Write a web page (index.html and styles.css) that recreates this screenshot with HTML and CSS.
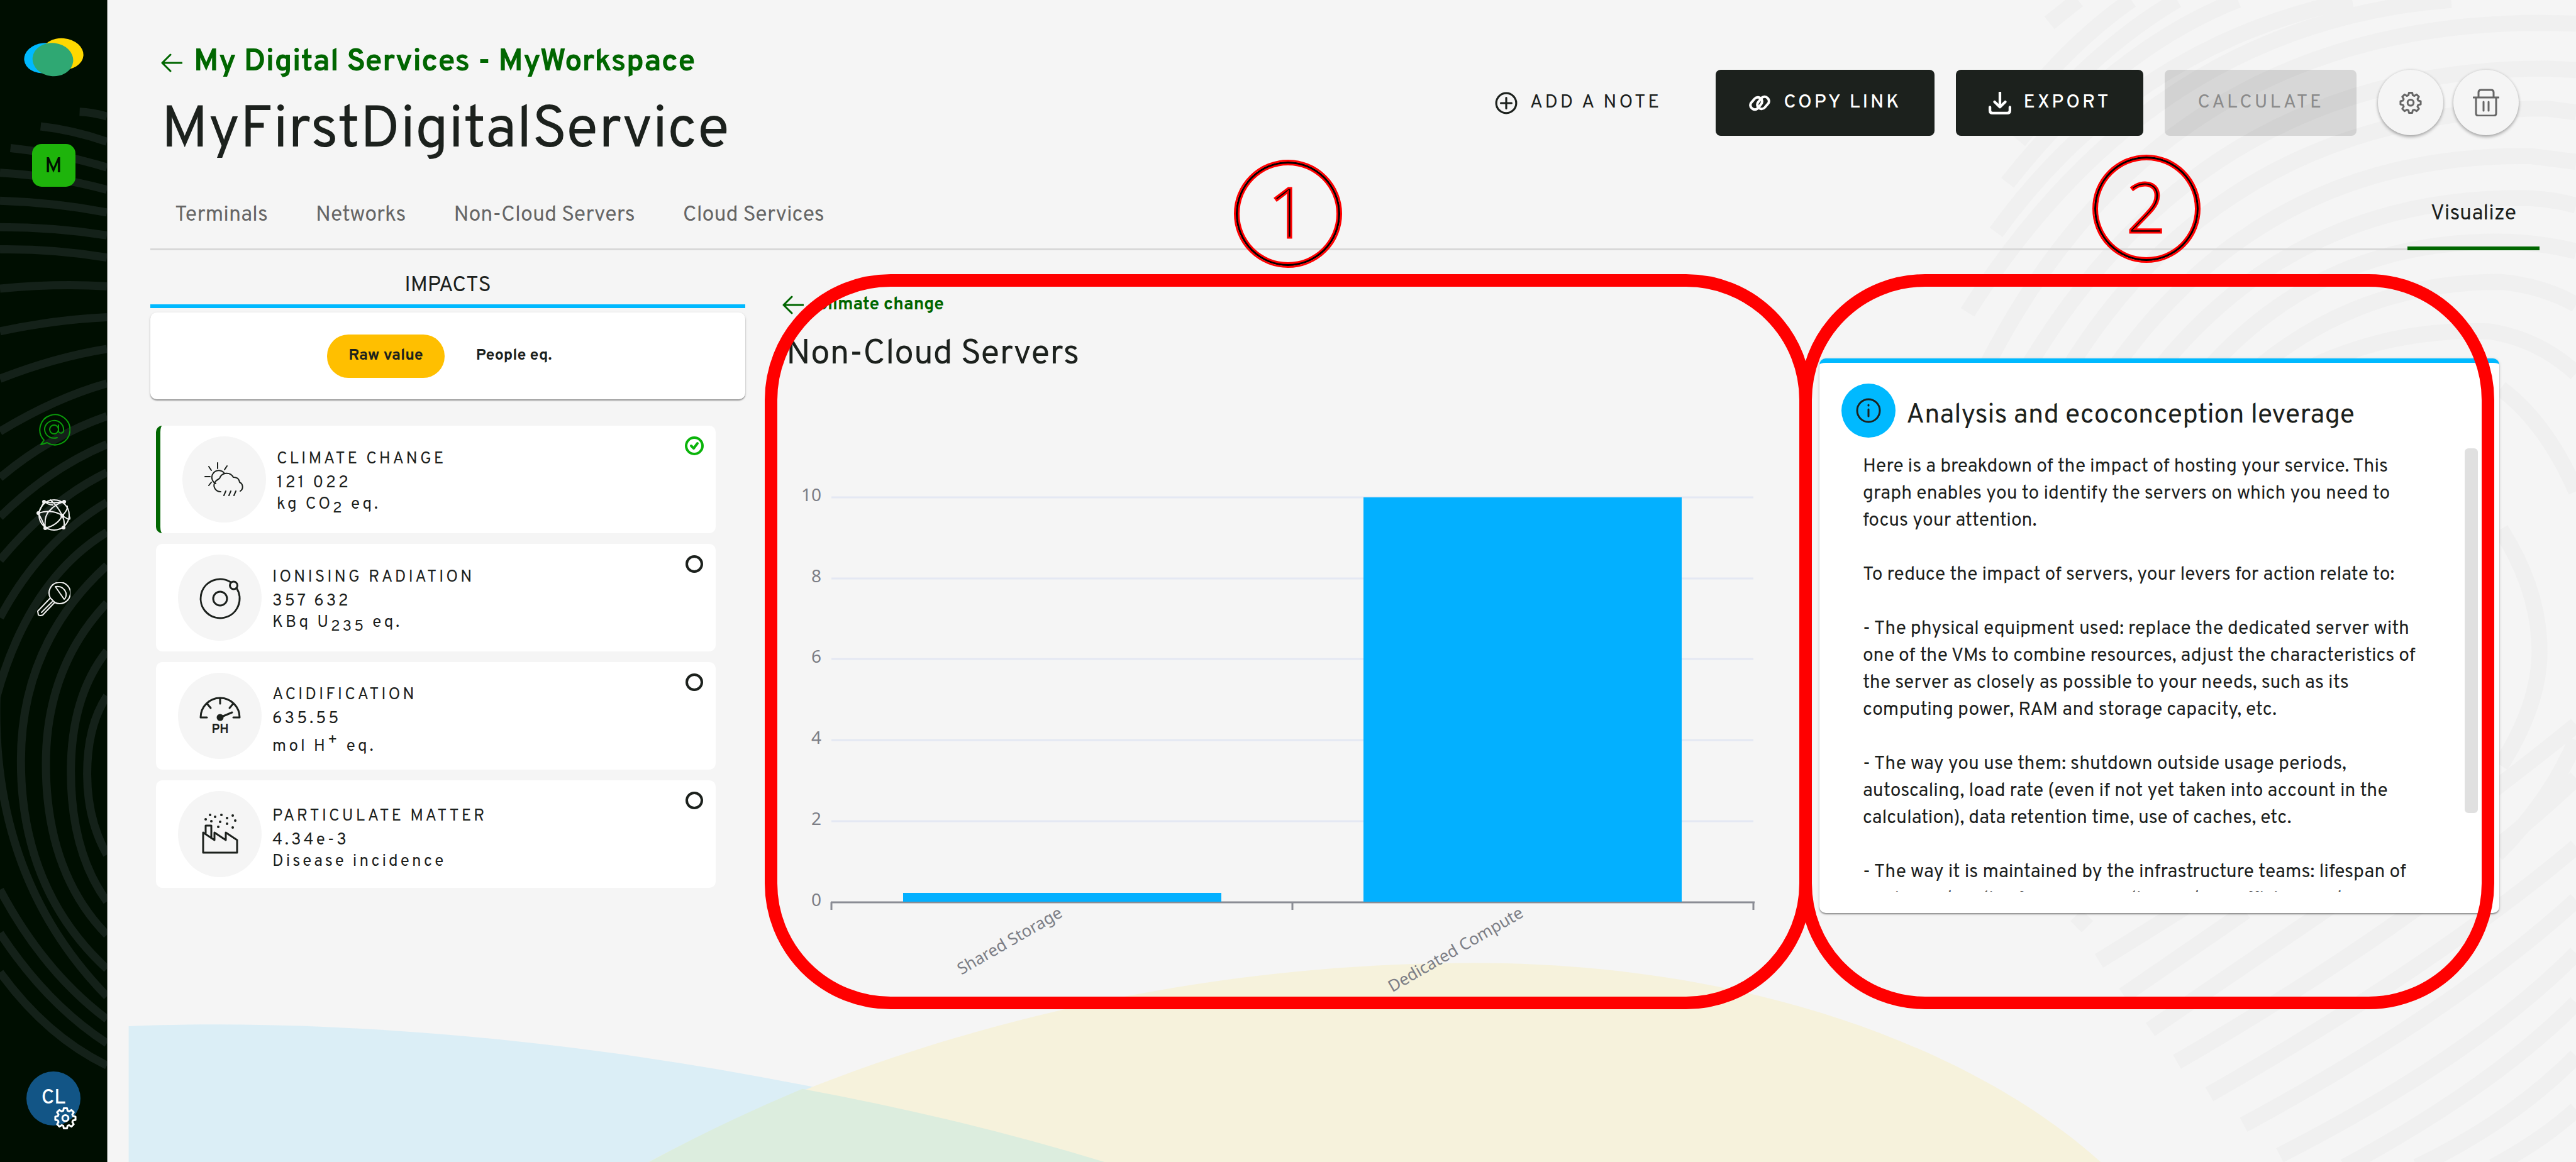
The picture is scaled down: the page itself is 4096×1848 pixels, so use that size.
FILE: index.html
```html
<!DOCTYPE html>
<html lang="en">
<head>
<meta charset="utf-8">
<title>MyFirstDigitalService</title>
<link rel="stylesheet" href="styles.css">
</head>
<body>
<svg class="defs" aria-hidden="true">
  <symbol id="gear" viewBox="0 0 24 24"><path d="M10.3 1.8h3.4l.6 2.7 1.7.7 2.4-1.5 2.4 2.4-1.5 2.4.7 1.7 2.7.6v3.4l-2.7.6-.7 1.7 1.5 2.4-2.4 2.4-2.4-1.5-1.7.7-.6 2.7h-3.4l-.6-2.7-1.7-.7-2.4 1.5-2.4-2.4 1.5-2.4-.7-1.7-2.7-.6v-3.4l2.7-.6.7-1.7-1.5-2.4 2.4-2.4 2.4 1.5 1.7-.7z" transform="translate(0 -.2)"/><circle cx="12" cy="12.2" r="3.2"/></symbol>
  <symbol id="arrow" viewBox="0 0 34 30"><path d="M33 15H2M15 2L2 15l13 13"/></symbol>
</svg>
<div class="app">
  <aside class="sidebar">
    <svg class="sidebar-rings" viewBox="0 0 184 1985" preserveAspectRatio="none" aria-hidden="true">
      <path d="M137 191Q160 192 184 199M70 216Q125 222 184 242M18 253Q105 262 184 286M0 295Q95 300 184 324M0 343Q95 346 184 363M0 388Q95 388 184 402M0 426Q95 425 184 440M0 493Q95 484 184 489M0 566Q95 546 184 542M0 647Q95 610 184 596M0 737Q95 680 184 655M0 816Q85 745 184 711M0 883Q85 800 184 759M0 957Q85 855 184 807M0 1055Q70 925 184 858M-6 1190Q50 990 184 909M-6 1190Q-15 1500 184 1702M184 966Q36 1100 36 1300Q36 1520 184 1655M184 1030Q79 1140 79 1305Q79 1490 184 1597M184 1112Q122 1190 122 1318Q122 1455 184 1540M184 1189Q150 1240 150 1322Q150 1400 184 1460M0 1520Q75 1660 184 1741M0 1594Q80 1715 184 1782M0 1661Q80 1770 184 1820"/>
    </svg>
    <svg class="logo" viewBox="0 0 102 67" role="img" aria-label="Logo">
      <ellipse cx="35" cy="35" rx="35" ry="26" fill="#00b9ff" transform="rotate(-6 35 35)"/>
      <ellipse cx="66" cy="28" rx="36" ry="27" fill="#ffd800" transform="rotate(5 66 28)"/>
      <ellipse cx="49.500" cy="37.500" rx="35" ry="28.500" fill="#2fa873" transform="rotate(6 49 37)"/>
    </svg>
    <button class="workspace">M</button>
    <nav class="side-nav">
      <a href="#services" class="side-link active" aria-label="Digital services"><svg viewBox="0 0 54 54"><path d="M12 44A24 24 0 1 1 17 48L7 51z"/><circle cx="28" cy="27" r="7"/><path d="M35 20v10a4 4 0 0 0 8-3A15 14 0 1 0 33 40"/></svg></a>
      <a href="#network" class="side-link" aria-label="Inventories"><svg viewBox="0 0 54 54"><circle cx="28" cy="28" r="24"/><path d="M3 25Q25 18 41 29T52 30M12 7Q24 10 44 7M12 7L3 25M4 27Q10 38 14 49M14 49Q12 30 20 22Q30 10 44 7M14 49Q34 44 41 29Q34 14 22 4M41 29Q50 20 49 14M41 29Q46 40 43 48M14 7Q18 12 26 12"/><g class="dots"><circle cx="12" cy="7" r="2"/><circle cx="44" cy="7" r="2"/><circle cx="3" cy="25" r="2"/><circle cx="41" cy="29" r="2"/><circle cx="14" cy="49" r="2"/><circle cx="43" cy="48" r="2"/></g></svg></a>
      <a href="#admin" class="side-link" aria-label="Administration"><svg viewBox="0 0 54 54"><path d="M22 25A17 17 0 1 1 29 32L10 52Q6 54 3 52L2 46L22 25L29 32M8 48L25 31"/><path d="M30 7Q43 5 47 17Q48 24 44 27z"/></svg></a>
    </nav>
    <button class="avatar" aria-label="Account CL">CL<svg class="avatar-gear" aria-hidden="true"><use href="#gear"/></svg></button>
  </aside>

  <main class="main">
    <svg class="backdrop" viewBox="184 0 4216 1985" preserveAspectRatio="none" aria-hidden="true">
      <g class="rings" transform="translate(3380 0) scale(.6506)">
        <path d="M185 60L260 0M150 230Q270 90 400 0M105 370Q300 130 520 0M75 480Q350 130 680 0M45 610Q400 120 980 0M-30 820Q450 60 1240 0M20 960Q480 60 1480 60L1568 62M130 960Q600 180 1490 180L1568 184M240 960Q660 290 1490 285L1568 295M360 960Q760 400 1450 410L1568 425M480 960Q840 520 1420 520Q1500 520 1568 540M610 960Q920 620 1400 635Q1490 640 1568 660M740 960Q1010 740 1370 740Q1480 750 1568 800M880 960Q1100 860 1340 870Q1470 890 1568 980M1370 1020Q1490 1110 1568 1290M1370 1390Q1472 1550 1472 1710Q1472 1850 1370 2010"/>
      </g>
      <g class="rings" transform="translate(3380 965) scale(.6506)">
        <path d="M255 950L285 920M315 1040L540 900M380 1130L700 910M450 1220L890 920Q1300 640 1568 420M520 1305Q1200 910 1568 560M605 1390Q1200 1050 1568 740M695 1470Q1250 1170 1568 880M790 1550Q1300 1290 1568 1020M960 1580Q1350 1370 1568 1150M1150 1580Q1400 1460 1568 1290M1350 1580Q1480 1510 1568 1430M1360 760Q1500 620 1568 460"/>
      </g>
      <path fill="#dbeef6" d="M219 1985V1753C700 1733 1350 1813 1886 1985Z"/>
      <path fill="#f6f2dc" d="M1108 1985C1400 1828 1900 1645 2517 1645C3000 1645 3380 1798 3588 1985Z"/>
      <path fill="#dcedde" d="M1108 1985Q1240 1914 1370 1860Q1640 1910 1886 1985Z"/>
    </svg>

    <header class="header">
      <div class="heading">
        <a class="back-link" href="#services"><svg class="arrow"><use href="#arrow"/></svg>My Digital Services - MyWorkspace</a>
        <h1>MyFirstDigitalService</h1>
      </div>
      <div class="toolbar">
        <button class="btn btn-text"><svg class="icon" viewBox="0 0 34 34"><circle cx="17" cy="17" r="15"/><path d="M17 9v16M9 17h16"/></svg>ADD A NOTE</button>
        <button class="btn btn-dark"><svg class="icon thick" viewBox="0 0 36 36"><path d="M14 27a7 7 0 0 1-10-9l6-7a7 7 0 0 1 11 1q2 5-1 8l-4 5"/><path d="M22 9a7 7 0 0 1 10 9l-6 7a7 7 0 0 1-11-1q-2-5 1-8l4-5"/></svg>COPY LINK</button>
        <button class="btn btn-dark"><svg class="icon thick" viewBox="0 0 34 34"><path d="M17 1v22M9 15l8 8 8-8M2 23v5q0 4 4 4h22q4 0 4-4v-5"/></svg>EXPORT</button>
        <button class="btn btn-disabled" disabled>CALCULATE</button>
        <div class="round-group">
          <button class="round" aria-label="Settings"><svg class="icon"><use href="#gear"/></svg></button>
          <button class="round" aria-label="Delete"><svg class="icon trash" viewBox="0 0 42 44"><path d="M1 14h40M5 14v25q0 4 4 4h24q4 0 4-4V14M9 14V6q0-4 4-4h16q4 0 4 4v8M17 21v14M25 21v14"/></svg></button>
        </div>
      </div>
    </header>

    <nav class="tabs">
      <a href="#terminals">Terminals</a>
      <a href="#networks">Networks</a>
      <a href="#servers">Non-Cloud Servers</a>
      <a href="#cloud">Cloud Services</a>
      <a href="#visualize" class="current">Visualize</a>
    </nav>

    <div class="content">
      <section class="impacts">
        <h2>IMPACTS</h2>
        <div class="switch">
          <button class="pill selected">Raw value</button>
          <button class="pill">People eq.</button>
        </div>
        <div class="cards">
          <button class="card selected">
            <span class="disc"><svg class="fine" viewBox="0 0 64 64"><path d="M18 38a11 11 0 1 1 14-16M21 5v9M7 11l4 6M36 10l-4 6M1 27h8M7 41l4-5M26 51a10 10 0 0 1-5-19a10 10 0 0 1 3-2a12 12 0 0 1 22-2q9 0 10 8a8 8 0 0 1 1 14M34 50l-3 7M42 50l-3 7M50 50l-3 7"/></svg></span>
            <span class="facts"><span class="name">CLIMATE CHANGE</span><span>121 022</span><span>kg CO<sub>2</sub> eq.</span></span>
            <svg class="state" viewBox="0 0 30 30"><circle cx="15" cy="15" r="13"/><path d="M10 15l4 4 6-8"/></svg>
          </button>
          <button class="card">
            <span class="disc"><svg viewBox="0 0 64 64"><path d="M49 7A31 31 0 1 0 58 16"/><circle cx="32" cy="33" r="11"/><circle cx="53.500" cy="12" r="6"/></svg></span>
            <span class="facts"><span class="name">IONISING RADIATION</span><span>357 632</span><span>KBq U<sub>235</sub> eq.</span></span>
            <svg class="state" viewBox="0 0 30 30"><circle cx="15" cy="15" r="12"/></svg>
          </button>
          <button class="card">
            <span class="disc"><svg viewBox="0 0 64 64"><path d="M11 34H1a31 31 0 0 1 62 0H53M32 3v9M12 13l5 6M52 13l-5 6M32 34l19-8"/><circle cx="32" cy="34" r="4" fill="currentColor"/><text x="32" y="59">PH</text></svg></span>
            <span class="facts"><span class="name">ACIDIFICATION</span><span>635.55</span><span>mol H<sup>+</sup> eq.</span></span>
            <svg class="state" viewBox="0 0 30 30"><circle cx="15" cy="15" r="12"/></svg>
          </button>
          <button class="card">
            <span class="disc"><svg viewBox="0 0 64 64"><path d="M5 61V29l18 12V29l18 12V29l18 12v20zM9 31V18h9v20"/><path class="specks" d="M16 1h.1M24 4h.1M34 1h.1M43 6h.1M52 2h.1M9 8h.1M18 11h.1M32 12h.1M43 15h.1M56 10h.1M29 20h.1M52 21h.1"/></svg></span>
            <span class="facts"><span class="name">PARTICULATE MATTER</span><span>4.34e-3</span><span>Disease incidence</span></span>
            <svg class="state" viewBox="0 0 30 30"><circle cx="15" cy="15" r="12"/></svg>
          </button>
        </div>
      </section>

      <section class="chart">
        <a class="crumb" href="#climate"><svg class="arrow"><use href="#arrow"/></svg>Climate change</a>
        <h2>Non-Cloud Servers</h2>
        <svg class="plot" viewBox="0 0 1620 1000" role="img" aria-label="Impact by server type">
          <path class="grid" d="M81 192H1547M81 321H1547M81 449H1547M81 578H1547M81 707H1547"/>
          <g class="y-labels"><text x="65" y="198">10</text><text x="65" y="327">8</text><text x="65" y="455">6</text><text x="65" y="584">4</text><text x="65" y="713">2</text><text x="65" y="842">0</text></g>
          <path class="axis" d="M80 836H1549M81 836V848M814 836V848M1547 836V848"/>
          <rect class="bar" x="195" y="821" width="506" height="14"/>
          <rect class="bar" x="927" y="192" width="506" height="643"/>
          <g class="x-labels"><text transform="translate(450 858) rotate(-30)">Shared Storage</text><text transform="translate(1183 858) rotate(-30)">Dedicated Compute</text></g>
        </svg>
        <div class="callout-frame"></div>
        <div class="callout-number">1</div>
      </section>

      <section class="analysis">
        <div class="panel">
          <div class="panel-head">
            <span class="info"><svg viewBox="0 0 40 40"><circle cx="20" cy="20" r="18"/><path d="M20 18v11M20 11v1"/></svg></span>
            <h2>Analysis and ecoconception leverage</h2>
          </div>
          <div class="panel-body">
            <div class="panel-text">
              <p>Here is a breakdown of the impact of hosting your service. This<br>graph enables you to identify the servers on which you need to<br>focus your attention.</p>
              <p>To reduce the impact of servers, your levers for action relate to:</p>
              <p>- The physical equipment used: replace the dedicated server with<br>one of the VMs to combine resources, adjust the characteristics of<br>the server as closely as possible to your needs, such as its<br>computing power, RAM and storage capacity, etc.</p>
              <p>- The way you use them: shutdown outside usage periods,<br>autoscaling, load rate (even if not yet taken into account in the<br>calculation), data retention time, use of caches, etc.</p>
              <p>- The way it is maintained by the infrastructure teams: lifespan of<br>equipment, policy for reuse, cooling system, efficiency, etc.</p>
            </div>
            <div class="scroll-thumb"></div>
          </div>
        </div>
        <div class="callout-frame"></div>
        <div class="callout-number">2</div>
      </section>
    </div>
  </main>
</div>
</body>
</html>
```
FILE: styles.css
```css
* { box-sizing: border-box; }
body { margin: 0; background: #f5f5f5; color: #1c211d; font-family: "Overpass", Roboto, "Liberation Sans", sans-serif; font-size: 30px; }
h1, h2, p { margin: 0; font-weight: 400; }
button { margin: 0; padding: 0; border: 0; background: none; color: inherit; font: inherit; }
a { color: inherit; text-decoration: none; }
svg { display: block; fill: none; stroke: currentColor; stroke-width: 3px; stroke-linecap: round; stroke-linejoin: round; flex: none; }
.defs { position: absolute; width: 0; height: 0; }
.app { display: flex; min-height: 100vh; }

/* Sidebar */
.sidebar { position: relative; width: 172px; flex: none; display: flex; flex-direction: column; align-items: center; padding: 60px 0 58px; background: #000e01; border-right: 2px solid #a8aaa8; }
.sidebar-rings { position: absolute; top: 0; left: 0; width: 100%; height: 100%; stroke: #142119; stroke-width: 14px; stroke-linecap: butt; }
.logo { position: relative; width: 95px; height: 62px; stroke: none; }
.workspace { position: relative; width: 69px; height: 68px; margin-top: 107px; padding-top: 4px; border-radius: 15px; background: #1eb40b; color: #000e01; font-size: 34px; font-weight: 500; }
.side-nav { position: relative; display: flex; flex-direction: column; gap: 81px; margin-top: 359px; color: #f0f0f0; }
.side-link svg { width: 54px; height: 54px; stroke-width: 2px; }
.side-link.active { color: #0a9c0a; }
.dots { fill: currentColor; }
.avatar { position: relative; width: 86px; height: 86px; margin-top: auto; border-radius: 50%; background: #125586; color: #fff; font-size: 32px; font-weight: 500; }
.avatar-gear { position: absolute; right: 6px; bottom: -6px; width: 36px; height: 36px; }

/* Page */
.main { position: relative; flex: 1; min-width: 0; padding: 64px 58px 0 67px; }
.main > * { position: relative; }
.main > .backdrop { position: absolute; top: 0; left: 0; width: 100%; height: 100%; stroke: none; }
.rings { stroke: #f0f0f0; stroke-width: 42px; stroke-linecap: butt; }
.header { display: flex; justify-content: space-between; align-items: flex-start; padding: 0 33px 0 17px; }
.heading { padding-top: 4px; }
.back-link { display: flex; align-items: center; gap: 18px; color: #006600; font-size: 49px; line-height: 64px; font-weight: 700; }
.arrow { width: 34px; height: 30px; stroke-width: 3px; }
h1 { margin-top: 22px; font-size: 94px; line-height: 112px; }
.toolbar { display: flex; gap: 34px; padding-top: 47px; }
.btn { display: flex; align-items: center; gap: 20px; height: 105px; padding: 0 52px; border-radius: 8px; font-size: 30px; letter-spacing: 4px; font-weight: 500; }
.btn-text { font-weight: 400; }
.btn-dark { background: #1c211d; color: #fff; }
.btn-disabled { background: rgba(0, 0, 0, .12); color: #8a8a8a; font-weight: 400; }
.icon { width: 36px; height: 36px; }
.thick { stroke-width: 4px; }
.round-group { display: flex; gap: 16px; }
.round { display: grid; place-items: center; width: 104px; height: 104px; border-radius: 50%; background: #f5f5f5; color: #666; box-shadow: 0 3px 5px rgba(0, 0, 0, .28), 0 0 4px rgba(0, 0, 0, .12); }
.trash { width: 42px; height: 44px; }
.avatar-gear, .round .icon:first-child { stroke-width: 2px; }
.round .trash:first-child { stroke-width: 3px; }
.tabs { display: flex; gap: 76px; margin-top: 16px; padding: 8px 0 0 39px; border-bottom: 3px solid #d8d8d8; color: #666; font-size: 34px; line-height: 105px; }
.tabs .current { margin: 0 0 -3px auto; padding: 0 37px; border-bottom: 6px solid #006600; color: #1c211d; line-height: 102px; }

.content { display: grid; grid-template-columns: 946fr 1676fr 1113fr; padding-right: 64px; }

/* Impacts */
.impacts h2 { padding: 37px 0 9px; border-bottom: 6px solid #00b9ff; font-size: 34px; line-height: 40px; text-align: center; }
.switch { display: flex; justify-content: center; align-items: center; height: 138px; margin-top: 7px; padding-left: 8px; border-radius: 10px; background: #fff; box-shadow: 0 2px 2px rgba(0, 0, 0, .35), 0 1px 4px rgba(0, 0, 0, .1); }
.pill { height: 69px; padding: 0 34px; border-radius: 34px; font-size: 25px; font-weight: 700; }
.pill + .pill { margin-left: 16px; }
.pill.selected { background: #ffbf00; }
.cards { display: flex; flex-direction: column; gap: 17px; margin: 42px 47px 0 9px; }
.card { display: flex; align-items: center; gap: 17px; height: 171px; padding: 0 19px 0 35px; border-radius: 10px; background: #fff; text-align: left; }
.card.selected { border-left: 7px solid #006600; }
.disc { display: grid; place-items: center; width: 133px; height: 137px; border-radius: 50%; background: #f5f5f5; }
.disc svg { width: 64px; height: 64px; overflow: visible; }
.disc .fine { stroke-width: 2px; }
.disc text { fill: currentColor; stroke: none; font-size: 20px; font-weight: 700; text-anchor: middle; }
.disc .specks { stroke-width: 4px; }
.facts { display: flex; flex-direction: column; flex: 1; padding-top: 16px; font-size: 26px; line-height: 34px; letter-spacing: 4px; }
.name { margin-bottom: 4px; }
.facts sub, .facts sup { font-size: 24px; line-height: 34px; }
.state { align-self: flex-start; width: 30px; height: 30px; margin-top: 17px; stroke-width: 4px; }
.selected .state { color: #0ab40a; }

/* Chart */
.chart { position: relative; margin: 0 0 0 56px; padding-top: 71px; }
.crumb { display: flex; align-items: center; gap: 20px; padding-left: 3px; color: #006600; font-size: 28px; line-height: 32px; font-weight: 700; }
.chart h2 { padding: 31px 0 3px 9px; font-size: 55px; line-height: 64px; }
.plot { width: 100%; height: auto; }
.grid { stroke: #e4e8f3; stroke-linecap: butt; }
.axis { stroke: #8a8c94; stroke-linecap: butt; }
.bar { fill: #03b0ff; stroke: none; }
.plot text { fill: #7c7e86; stroke: none; font-family: "Noto Sans", sans-serif; font-size: 26px; text-anchor: end; }
.plot .y-labels text { font-size: 28px; }
.callout-frame { position: absolute; border: 20px solid #f00; border-radius: 200px; }
.chart .callout-frame { top: 38px; left: -25px; right: -20px; height: 1169px; }
.callout-number { position: absolute; display: grid; place-items: center; width: 172px; height: 172px; border: 3px solid #f00; border-radius: 50%; color: #000; font-family: "Open Sans", sans-serif; font-size: 110px; font-weight: 300; line-height: 156px; align-content: start; box-shadow: inset 0 0 0 3px #000, inset 0 0 0 6px #f00; -webkit-text-stroke: 3px #f00; }
.chart .callout-number { top: -144px; left: calc(50% - 89px); }

/* Analysis */
.analysis { position: relative; margin-left: 32px; padding-top: 172px; }
.panel { height: 882px; padding: 33px 34px 34px 35px; border-top: 7px solid #00b9ff; border-radius: 10px; background: #fff; box-shadow: 0 2px 2px rgba(0, 0, 0, .35), 0 1px 5px rgba(0, 0, 0, .15); }
.panel-head { display: flex; align-items: center; gap: 17px; }
.panel-head h2 { padding-top: 16px; font-size: 43px; line-height: 50px; }
.info { display: grid; place-items: center; width: 86px; height: 86px; border-radius: 50%; background: #00b9ff; }
.info svg { width: 40px; height: 40px; }
.panel-body { display: flex; justify-content: space-between; height: 705px; margin-top: 17px; padding-left: 34px; overflow: hidden; }
.panel-text { padding-top: 8px; line-height: 43px; white-space: nowrap; }
.panel-text p + p { margin-top: 43px; }
.scroll-thumb { width: 21px; height: 580px; border-radius: 6px; background: #e0e0e0; flex: none; }
.analysis .callout-frame { top: 38px; left: -32px; right: 8px; height: 1169px; }
.analysis .callout-number { top: -152px; left: calc(50% - 107px); }
```
